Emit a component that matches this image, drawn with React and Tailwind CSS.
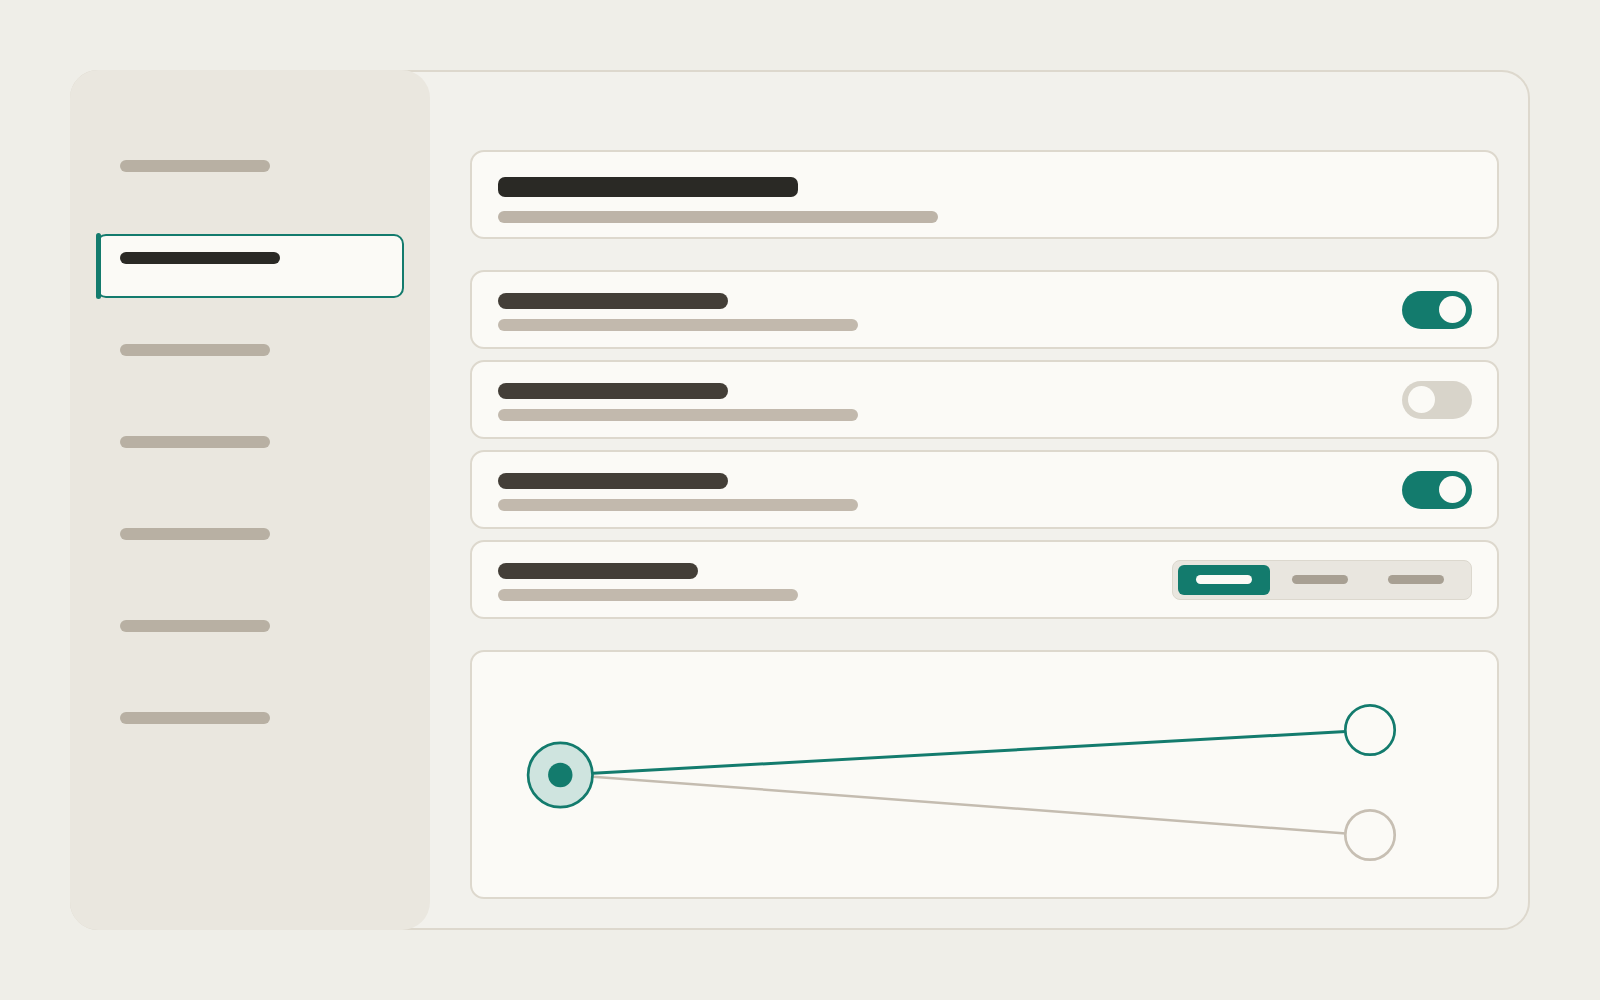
const navItems = [
  { id: 'general', active: false, gap: '' },
  { id: 'profile', active: true, gap: 'mt-9' },
  { id: 'security', active: false, gap: 'mt-5' },
  { id: 'billing', active: false, gap: 'mt-7' },
  { id: 'team', active: false, gap: 'mt-7' },
  { id: 'integrations', active: false, gap: 'mt-7' },
  { id: 'advanced', active: false, gap: 'mt-7' },
];

const settings = [
  { id: 'notifications', type: 'toggle', on: true, title: 'w-[230px]', sub: 'w-[360px]' },
  { id: 'sync', type: 'toggle', on: false, title: 'w-[230px]', sub: 'w-[360px]' },
  { id: 'backup', type: 'toggle', on: true, title: 'w-[230px]', sub: 'w-[360px]' },
  { id: 'frequency', type: 'segment', title: 'w-[200px]', sub: 'w-[300px]' },
];

function NavItem({ active, className }) {
  if (active) {
    return (
      <div className={`relative mx-[26px] flex h-16 items-start rounded-[10px] border-2 border-[#137b6d] bg-[#fbfaf6] pl-[22px] pt-[16px] ${className}`}>
        <span className="absolute -bottom-[3px] -left-[2px] -top-[3px] w-[5px] rounded-full bg-[#137b6d]" />
        <span className="h-3 w-40 rounded-full bg-[#2a2925]" />
      </div>
    );
  }
  return (
    <div className={`mx-[26px] flex h-16 items-center border-2 border-transparent pl-[22px] ${className}`}>
      <span className="h-3 w-[150px] rounded-full bg-[#b8b0a3]" />
    </div>
  );
}

function Toggle({ on }) {
  return (
    <div
      className={`flex h-[38px] w-[70px] items-center rounded-full p-[6px] ${
        on ? 'justify-end bg-[#137b6d]' : 'justify-start bg-[#d8d4ca]'
      }`}
    >
      <span className="h-[27px] w-[27px] rounded-full bg-[#fbfaf6]" />
    </div>
  );
}

function Segmented() {
  return (
    <div className="grid h-10 w-[300px] grid-cols-[92px_92px_92px] gap-1 rounded-[8px] border-[1.5px] border-[#dcd8ce] bg-[#e9e6df] py-[4px] pl-[4.5px]">
      <div className="flex items-center justify-center rounded-[6px] bg-[#137b6d]">
        <span className="h-[9px] w-[56px] rounded-full bg-[#fbfaf6]" />
      </div>
      <div className="flex items-center justify-center">
        <span className="h-[9px] w-[56px] rounded-full bg-[#a8a093]" />
      </div>
      <div className="flex items-center justify-center">
        <span className="h-[9px] w-[56px] rounded-full bg-[#a8a093]" />
      </div>
    </div>
  );
}

function SettingRow({ item }) {
  return (
    <div className="flex h-[79px] items-center justify-between rounded-[14px] border-2 border-[#ddd8cd] bg-[#fbfaf6] pl-[26px] pr-[25px]">
      <div className="flex flex-col pt-[4px]">
        <span className={`h-4 rounded-full bg-[#433e37] ${item.title}`} />
        <span className={`mt-[10px] h-3 rounded-full bg-[#c2b9ad] ${item.sub}`} />
      </div>
      {item.type === 'toggle' ? <Toggle on={item.on} /> : <Segmented />}
    </div>
  );
}

function RouteGraph() {
  return (
    <div className="h-[249px] overflow-hidden rounded-[14px] border-2 border-[#ddd8cd] bg-[#fbfaf6]">
      <svg width="1025" height="245" viewBox="0 0 1025 245" className="block">
        <line x1="121" y1="121.3" x2="874" y2="79.5" stroke="#137b6d" strokeWidth="3" />
        <line x1="121" y1="124.7" x2="874" y2="181.5" stroke="#c4bcb0" strokeWidth="2.5" />
        <circle cx="88.3" cy="123" r="32.2" fill="#cfe4df" stroke="#137b6d" strokeWidth="2.7" />
        <circle cx="88.3" cy="123" r="12.2" fill="#137b6d" />
        <circle cx="898" cy="78" r="24.7" fill="#fbfaf6" stroke="#137b6d" strokeWidth="2.7" />
        <circle cx="898" cy="183" r="24.7" fill="#fbfaf6" stroke="#c7bfb3" strokeWidth="2.7" />
      </svg>
    </div>
  );
}

export default function App() {
  return (
    <div className="min-h-screen bg-[#efeee8] pl-[70px] pt-[70px]">
      <div className="flex h-[860px] w-[1460px] rounded-[28px] border-2 border-[#ddd8cd] bg-[#f2f1ec]">
        <aside className="-my-[2px] -ml-[2px] flex w-[360px] shrink-0 flex-col rounded-[28px] bg-[#eae7df] pt-[64px]">
          {navItems.map((item) => (
            <NavItem key={item.id} active={item.active} className={item.gap} />
          ))}
        </aside>

        <main className="flex flex-1 flex-col pl-10 pr-[29px] pt-[78px]">
          <div className="h-[89px] rounded-[14px] border-2 border-[#ddd8cd] bg-[#fbfaf6] px-[26px] pt-[24.5px]">
            <div className="h-5 w-[300px] rounded-[7px] bg-[#2a2925]" />
            <div className="mt-[14px] h-3 w-[440px] rounded-full bg-[#bdb4a8]" />
          </div>

          <div className="mt-[31px] flex flex-col gap-[11px]">
            {settings.map((item) => (
              <SettingRow key={item.id} item={item} />
            ))}
          </div>

          <div className="mt-[31px]">
            <RouteGraph />
          </div>
        </main>
      </div>
    </div>
  );
}
